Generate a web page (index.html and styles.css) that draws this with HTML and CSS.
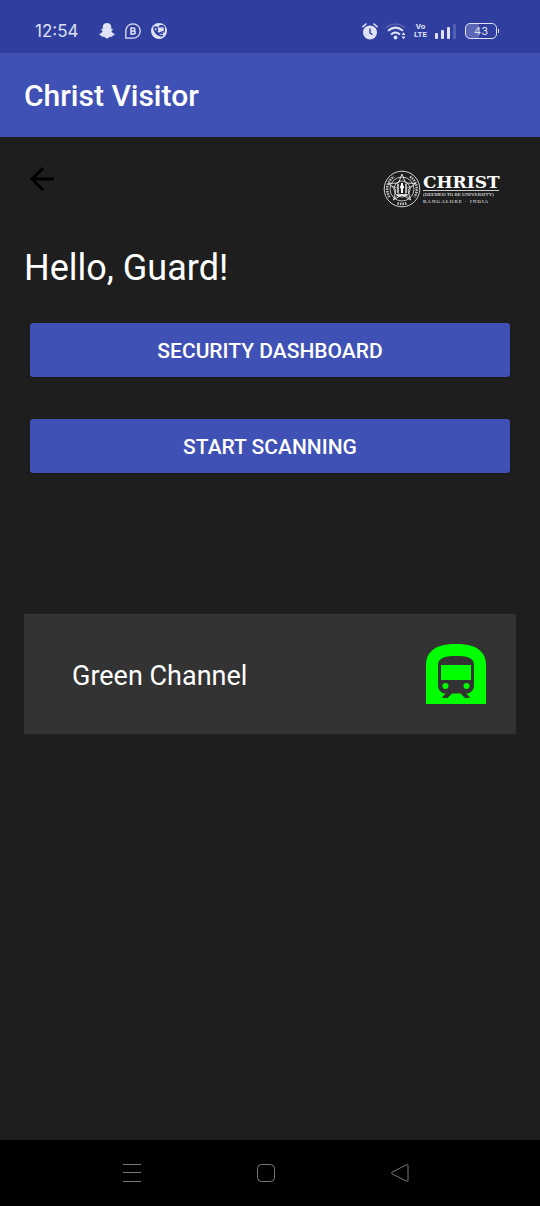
FILE: index.html
```html
<!DOCTYPE html>
<html lang="en">
<head>
<meta charset="utf-8">
<meta name="viewport" content="width=device-width, initial-scale=1">
<title>Christ Visitor</title>
<link rel="stylesheet" href="styles.css">
</head>
<body>
<div class="status-bar">
  <div class="status-group">
    <span class="clock">12:54</span>
    <svg class="notice" viewBox="0 0 16 16" aria-hidden="true"><path fill="currentColor" d="M8 0C5.200 0 3.700 1.900 3.700 4.300v1.600c-.8.200-1.700-.1-1.700.6 0 .6 1.400.8 1.500 1.400.1.700-1.200 2.600-3.300 3.100-.5.700.6 1.200 2.100 1.500.3.500 0 1.100.6 1.200.9.100 1.700-.2 2.600.3.800.600 1.500 1.500 2.500 1.500s1.700-.9 2.500-1.500c.9-.5 1.700-.2 2.600-.3.600-.1.300-.7.600-1.200 1.500-.3 2.600-.8 2.100-1.500-2.100-.5-3.400-2.400-3.300-3.100.1-.6 1.500-.8 1.500-1.400 0-.7-.9-.4-1.700-.6V4.300C12.300 1.900 10.800 0 8 0z"/></svg>
    <svg class="notice" viewBox="0 0 16 16" aria-hidden="true"><path fill="none" stroke="currentColor" stroke-width="1.300" d="M.8 15.200V8A7.200 7.200 0 1 1 8 15.200z"/><path fill="none" stroke="currentColor" stroke-width="1.500" d="M6 5v6h2.700a1.500 1.500 0 0 0 0-3H6h2.400a1.500 1.500 0 0 0 0-3z"/></svg>
    <svg class="notice" viewBox="0 0 16 16" aria-hidden="true"><circle cx="8" cy="8" r="8" fill="currentColor"/><path fill="none" stroke="#303f9f" stroke-width="1.600" d="M3.500 3.500c-1.300 4.500 2.500 9.500 8.500 9.200M4 4l2 .5.5 2.500-1 1c.6 1.300 1.400 2.200 2.700 2.700l1.300-1 2.500 1"/><path fill="none" stroke="#303f9f" stroke-width="1.200" d="M7.500 3.800h5.800v5h-3M9 4V2.500h3V4"/></svg>
  </div>
  <div class="status-group status-right">
    <svg class="alarm" viewBox="0 0 16 17" aria-hidden="true"><circle cx="8" cy="9.500" r="7" fill="currentColor"/><path fill="none" stroke="currentColor" stroke-width="1.600" stroke-linecap="round" d="M1 3.700L4 1M15 3.700L12 1"/><path fill="none" stroke="#303f9f" stroke-width="1.400" stroke-linecap="round" d="M8 6v3.800l2 1.500"/></svg>
    <svg class="wifi" viewBox="0 0 20 17" aria-hidden="true"><path fill="none" stroke="currentColor" stroke-width="1.600" opacity=".22" d="M0 4.500Q9.500-2.500 19 4.500"/><path fill="none" stroke="currentColor" stroke-width="2" d="M2 7.800Q9.500 1.500 17 7.800M5 11.500Q9.500 7.500 14 11.500"/><circle cx="9.500" cy="14.500" r="1.900" fill="currentColor"/><path fill="currentColor" d="M15.500 12l2-2.700 2 2.700zM15.500 13.500h4l-2 2.700z"/></svg>
    <span class="volte"><span>Vo</span><span>LTE</span></span>
    <svg class="signal" viewBox="0 0 22 16" aria-hidden="true"><g fill="currentColor"><rect y="10" width="3" height="6" rx="1"/><rect x="6" y="7" width="3" height="9" rx="1"/><rect x="12" y="4" width="3" height="12" rx="1"/><rect x="18" y="1" width="3" height="15" rx="1" opacity=".2"/></g></svg>
    <span class="battery">43</span>
  </div>
</div>

<header class="app-bar"><h1 class="app-title">Christ Visitor</h1></header>

<main class="content">
  <div class="top-row">
    <button class="back" type="button" aria-label="Back"><svg viewBox="0 0 24 24"><path d="M20 11H7.830l5.590-5.590L12 4l-8 8 8 8 1.410-1.410L7.830 13H20z"/></svg></button>
    <div class="brand">
      <svg class="seal" viewBox="0 0 38 38" aria-hidden="true">
        <g fill="none" stroke="#fff">
          <circle cx="19" cy="19" r="17.800" stroke-width=".8"/>
          <path stroke-width="2.500" stroke-dasharray="1.500 1" opacity=".75" d="M6.500 27A14.800 14.800 0 0 1 11 6.600M27 6.600A14.800 14.800 0 0 1 31.500 27M14.500 33.200A14.800 14.800 0 0 0 23.500 33.200"/>
          <circle cx="19" cy="19" r="12" stroke-width=".7"/>
          <path stroke-width=".8" d="M19 4l3.500 9 10 .5-7.500 6.500 2.500 10-8.500-5.500-8.500 5.500L13 20l-7.500-6.500 10-.5z"/>
          <circle cx="19" cy="19" r="8" stroke-width=".7"/>
          <path stroke-width="1.300" d="M15 14v9M23 14v9M14 25h10"/>
          <path stroke-width="2" d="M19 13v10"/>
          <path stroke-width=".8" opacity=".7" d="M9 16l5 2M29 16l-5 2M12 28l4-5M26 28l-4-5"/>
        </g>
        <circle cx="19" cy="17" r="2" fill="#fff"/>
      </svg>
      <div class="brand-text">
        <span class="brand-name">CHRIST</span>
        <span class="brand-sub">(DEEMED TO BE UNIVERSITY)</span>
        <span class="brand-city">BANGALORE · INDIA</span>
      </div>
    </div>
  </div>
  <h2 class="greeting">Hello, Guard!</h2>
  <div class="actions">
    <button class="action" type="button">SECURITY DASHBOARD</button>
    <button class="action" type="button">START SCANNING</button>
  </div>
  <button class="card" type="button">
    <span class="card-label">Green Channel</span>
    <svg class="subway" viewBox="2 2 20 20" aria-hidden="true"><path fill="#0f0" d="M17.800 2.800C16 2.090 13.860 2 12 2s-4 .09-5.800.8C3.530 3.840 2 6.050 2 8.860V22h20V8.860c0-2.810-1.530-5.020-4.200-6.060z"/><path fill="#333" d="M18 15.880c0 1.450-1.180 2.620-2.630 2.620l1.130 1.120V20H15l-1.500-1.500h-2.830L9.170 20H7.500v-.38l1.120-1.120C7.180 18.500 6 17.320 6 15.880V9c0-2.630 3-3 6-3 3.320 0 6 .38 6 3z"/><path fill="#0f0" d="M7 9h10v5H7z"/><circle cx="8.500" cy="16" r="1" fill="#0f0"/><circle cx="15.500" cy="16" r="1" fill="#0f0"/></svg>
  </button>
</main>

<nav class="nav-bar" aria-label="System">
  <button class="nav-button" type="button" aria-label="Recent apps"><svg viewBox="0 0 20 20"><path d="M1 1.500h18M1 9.500h18M1 18.500h18"/></svg></button>
  <button class="nav-button" type="button" aria-label="Home"><svg viewBox="0 0 20 20"><rect x="1.500" y="1.500" width="17" height="17" rx="4"/></svg></button>
  <button class="nav-button" type="button" aria-label="Go back"><svg viewBox="0 0 20 20"><path d="M16.500 1.800L2 9.200q-1.300.8 0 1.600l14.500 7.400q1.500.4 1.500-1V2.800q0-1.400-1.500-1z"/></svg></button>
</nav>
</body>
</html>
```
FILE: styles.css
```css
* {
  box-sizing: border-box;
}

body {
  margin: 0;
  min-height: 100vh;
  display: flex;
  flex-direction: column;
  background: #1e1e1e;
  color: #fff;
  font-family: Roboto, sans-serif;
}

button {
  border: 0;
  padding: 0;
  margin: 0;
  background: none;
  color: inherit;
  font: inherit;
  cursor: pointer;
}

svg {
  display: block;
}

h1,
h2 {
  margin: 0;
}

.status-bar {
  display: flex;
  justify-content: space-between;
  height: 53px;
  padding: 9px 43px 0 35px;
  background: #303f9f;
  color: #dfe2f5;
}

.status-group {
  display: flex;
  align-items: center;
  gap: 10px;
}

.clock {
  margin-right: 10px;
  font-family: Inter, sans-serif;
  font-size: 17px;
}

.notice {
  width: 16px;
  height: 16px;
}

.alarm {
  width: 16px;
  height: 17px;
}

.wifi {
  width: 20px;
  height: 17px;
}

.volte {
  display: flex;
  flex-direction: column;
  align-items: center;
  font-family: "Liberation Sans Narrow", Roboto, sans-serif;
  font-size: 8px;
  line-height: 8px;
  font-weight: 700;
}

.signal {
  width: 22px;
  height: 16px;
}

.status-right {
  gap: 8px;
}

.battery {
  position: relative;
  width: 32px;
  height: 16px;
  border: 1px solid currentColor;
  border-radius: 5px;
  background: linear-gradient(90deg, #5b67b4 43%, transparent 43%);
  font-family: Inter, sans-serif;
  font-size: 11px;
  line-height: 14px;
  text-align: center;
}

.battery::after {
  content: "";
  position: absolute;
  right: -3px;
  top: 5px;
  width: 1px;
  height: 4px;
  background: currentColor;
}

.app-bar {
  display: flex;
  align-items: center;
  min-height: 84px;
  padding: 2px 24px 0;
  background: #3f51b5;
}

.app-title {
  font-size: 30px;
  line-height: 36px;
  font-weight: 500;
}

.content {
  flex: 1;
  display: flex;
  flex-direction: column;
  padding: 24px;
}

.top-row {
  display: flex;
  justify-content: space-between;
  align-items: flex-start;
}

.back svg {
  width: 36px;
  height: 36px;
}

.brand {
  display: flex;
  gap: 2px;
  padding: 9px 17px 0 0;
}

.seal {
  width: 38px;
  height: 38px;
}

.brand-text {
  display: flex;
  flex-direction: column;
  padding-top: 4px;
  width: 76px;
  white-space: nowrap;
}

.brand-name {
  border-bottom: 1px solid #ccc;
  font-family: "DejaVu Serif", serif;
  font-size: 17px;
  line-height: 16px;
  font-weight: 700;
}

.brand-sub,
.brand-city {
  font-family: "Liberation Serif", serif;
  font-size: 5px;
  line-height: 7px;
}

.brand-city {
  letter-spacing: 1px;
}

.greeting {
  margin-top: 39px;
  font-size: 36px;
  line-height: 42px;
  font-weight: 400;
}

.actions {
  display: flex;
  flex-direction: column;
  gap: 42px;
  padding: 34px 6px 0;
}

.action {
  height: 54px;
  padding-top: 2px;
  border-radius: 3px;
  background: #3f51b5;
  box-shadow: 0 1px 2px #171717;
  font-size: 21px;
  font-weight: 500;
}

.card {
  display: flex;
  justify-content: space-between;
  align-items: center;
  margin-top: 141px;
  padding: 30px 30px 30px 48px;
  background: #333;
  font-size: 27px;
  text-align: left;
}

.card-label {
  padding-top: 4px;
}

.subway {
  width: 60px;
  height: 60px;
}

.nav-bar {
  display: flex;
  justify-content: center;
  gap: 114px;
  height: 66px;
  padding-right: 8px;
  background: #000;
}

.nav-button svg {
  width: 20px;
  height: 20px;
  fill: none;
  stroke: #777;
  stroke-width: 1;
}
```
